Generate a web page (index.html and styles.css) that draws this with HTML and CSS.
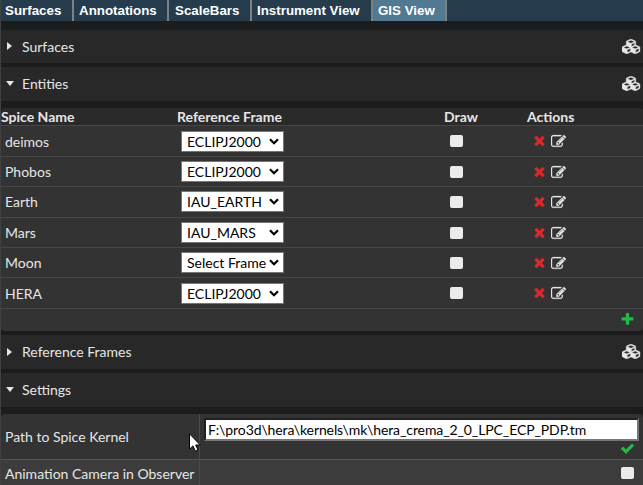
FILE: index.html
```html
<!DOCTYPE html>
<html lang="en">
<head>
<meta charset="utf-8">
<title>GIS View</title>
<link rel="stylesheet" href="styles.css">
</head>
<body>
<svg class="defs" width="0" height="0">
  <symbol id="cubes" viewBox="0 0 2304 1792"><path d="M640 1632l384-192v-314l-384 164v342zm-64-454l404-173-404-173-404 173zm1088 454l384-192v-314l-384 164v342zm-64-454l404-173-404-173-404 173zm-448-293l384-165v-266l-384 164v267zm-64-379l441-189-441-189-441 189zm1088 518v416q0 36-19 67t-52 47l-448 224q-25 14-57 14t-57-14l-448-224q-4-2-7-4-2 2-7 4l-448 224q-25 14-57 14t-57-14l-448-224q-33-16-52-47t-19-67v-416q0-38 21.5-70t56.5-48l434-186v-400q0-38 21.5-70t56.5-48l448-192q23-10 50-10t50 10l448 192q35 16 56.500 48t21.500 70v400l434 186q36 16 57 48t21 70z"/></symbol>
  <symbol id="remove" viewBox="0 0 1792 1792"><path d="M1490 1322q0 40-28 68l-136 136q-28 28-68 28t-68-28l-294-294-294 294q-28 28-68 28t-68-28l-136-136q-28-28-28-68t28-68l294-294-294-294q-28-28-28-68t28-68l136-136q28-28 68-28t68 28l294 294 294-294q28-28 68-28t68 28l136 136q28 28 28 68t-28 68l-294 294 294 294q28 28 28 68z"/></symbol>
  <symbol id="edit" viewBox="0 0 1792 1792"><path d="M888 1184l116-116-152-152-116 116v56h96v96h56zm440-720q-16-16-33 1l-350 350q-17 17-1 33t33-1l350-350q17-17 1-33zm80 594v190q0 119-84.500 203.500t-203.500 84.500h-832q-119 0-203.500-84.500t-84.500-203.500v-832q0-119 84.500-203.500t203.500-84.500h832q63 0 117 25 15 7 18 23 3 17-9 29l-49 49q-14 14-32 8-23-6-45-6h-832q-66 0-113 47t-47 113v832q0 66 47 113t113 47h832q66 0 113-47t47-113v-126q0-13 9-22l64-64q15-15 35-7t20 29zm-96-738l288 288-672 672h-288v-288zm444 132l-92 92-288-288 92-92q28-28 68-28t68 28l152 152q28 28 28 68t-28 68z"/></symbol>
  <symbol id="add" viewBox="0 0 1792 1792"><path d="M1600 736v192q0 40-28 68t-68 28h-416v416q0 40-28 68t-68 28h-192q-40 0-68-28t-28-68v-416h-416q-40 0-68-28t-28-68v-192q0-40 28-68t68-28h416v-416q0-40 28-68t68-28h192q40 0 68 28t28 68v416h416q40 0 68 28t28 68z"/></symbol>
  <symbol id="check" viewBox="0 0 1792 1792"><path d="M1671 566q0 40-28 68l-724 724-136 136q-28 28-68 28t-68-28l-136-136-362-362q-28-28-28-68t28-68l136-136q28-28 68-28t68 28l294 295 656-657q28-28 68-28t68 28l136 136q28 28 28 68z"/></symbol>
  <symbol id="chevron" viewBox="0 0 10 7"><path d="M1 1.200L5 5.200L9 1.200" fill="none" stroke="#000" stroke-width="2.200"/></symbol>
</svg>

<nav class="tabs">
  <div class="tab t1">Surfaces</div>
  <div class="tab t2">Annotations</div>
  <div class="tab t3">ScaleBars</div>
  <div class="tab t4">Instrument View</div>
  <div class="tab t5 active">GIS View</div>
</nav>

<main class="panel">
  <div class="section surfaces"><i class="caret"></i><span>Surfaces</span><svg class="cubes"><use href="#cubes"/></svg></div>
  <div class="section entities"><i class="caret open"></i><span>Entities</span><svg class="cubes"><use href="#cubes"/></svg></div>

  <div class="entity-table">
    <div class="row head"><b>Spice Name</b><b>Reference Frame</b><b>Draw</b><b>Actions</b></div>
    <div class="row tall"><span class="name">deimos</span><div class="pick"><select><option>ECLIPJ2000</option></select><svg><use href="#chevron"/></svg></div><i class="box"></i><div class="actions"><svg class="icon red"><use href="#remove"/></svg><svg class="icon edit"><use href="#edit"/></svg></div></div>
    <div class="row"><span class="name">Phobos</span><div class="pick"><select><option>ECLIPJ2000</option></select><svg><use href="#chevron"/></svg></div><i class="box"></i><div class="actions"><svg class="icon red"><use href="#remove"/></svg><svg class="icon edit"><use href="#edit"/></svg></div></div>
    <div class="row long"><span class="name">Earth</span><div class="pick"><select><option>IAU_EARTH</option></select><svg><use href="#chevron"/></svg></div><i class="box"></i><div class="actions"><svg class="icon red"><use href="#remove"/></svg><svg class="icon edit"><use href="#edit"/></svg></div></div>
    <div class="row"><span class="name">Mars</span><div class="pick"><select><option>IAU_MARS</option></select><svg><use href="#chevron"/></svg></div><i class="box"></i><div class="actions"><svg class="icon red"><use href="#remove"/></svg><svg class="icon edit"><use href="#edit"/></svg></div></div>
    <div class="row"><span class="name">Moon</span><div class="pick"><select><option>Select Frame</option></select><svg><use href="#chevron"/></svg></div><i class="box"></i><div class="actions"><svg class="icon red"><use href="#remove"/></svg><svg class="icon edit"><use href="#edit"/></svg></div></div>
    <div class="row tall"><span class="name">HERA</span><div class="pick"><select><option>ECLIPJ2000</option></select><svg><use href="#chevron"/></svg></div><i class="box"></i><div class="actions"><svg class="icon red"><use href="#remove"/></svg><svg class="icon edit"><use href="#edit"/></svg></div></div>
    <div class="add-row"><svg class="icon green"><use href="#add"/></svg></div>
  </div>

  <div class="section frames"><i class="caret"></i><span>Reference Frames</span><svg class="cubes"><use href="#cubes"/></svg></div>
  <div class="section settings"><i class="caret open"></i><span>Settings</span></div>

  <div class="settings-table">
    <div class="setting path">
      <div class="label">Path to Spice Kernel</div>
      <div class="value"><input type="text" value="F:\pro3d\hera\kernels\mk\hera_crema_2_0_LPC_ECP_PDP.tm"><svg class="icon green"><use href="#check"/></svg></div>
    </div>
    <div class="setting camera">
      <div class="label">Animation Camera in Observer</div>
      <div class="value"><i class="box"></i></div>
    </div>
  </div>
</main>
<svg class="pointer" viewBox="0 0 12 19"><path d="M.5 .8V16.200L4 12.900L6.300 18.200L9 17L6.700 12H11.300Z" fill="#fff" stroke="#000"/></svg>
</body>
</html>
```

FILE: styles.css
```css
* { box-sizing: border-box; }
body {
  margin: 0;
  width: 643px;
  height: 485px;
  overflow: hidden;
  background: #1b1c1d;
  color: #e6e6e6;
  font: 14px/20px Lato, sans-serif;
  border-left: 1px solid #404142;
}
.defs { position: absolute; }
svg { display: block; fill: #e6e6e6; }

.tabs {
  display: flex;
  height: 21px;
  background: #253c4d;
  color: #fff;
  font: bold 13.333px/21px "Liberation Sans", sans-serif;
}
.tab { padding-left: 5px; border-right: 2px solid #808080; white-space: nowrap; }
.t1 { width: 73px; padding-left: 4px; }
.t2 { width: 95px; }
.t3 { width: 83px; padding-left: 6px; }
.t4 { width: 121px; }
.t5 { width: 74px; }
.active { background: #527992; }

.section {
  display: flex;
  align-items: center;
  height: 34px;
  padding: 0 2px 0 5px;
  background: #282828;
}
.section span { flex: 1; }
.surfaces { height: 33px; margin-top: 9px; }
.entities { margin-top: 4px; }
.frames, .settings { margin-top: 4px; }
.caret {
  width: 16px;
  height: 9px;
}
.caret::before {
  content: "";
  display: block;
  width: 0;
  margin-left: 1px;
  border: solid transparent;
  border-width: 4.5px 0 4.5px 5px;
  border-left-color: #e6e6e6;
}
.caret.open::before {
  margin: 1px 0 0;
  border-width: 5px 4.5px 0;
  border-color: #e6e6e6 transparent transparent;
}
.cubes { width: 19px; height: 15px; margin-top: -1px; stroke: #e6e6e6; stroke-width: 50; }

.entity-table {
  margin-top: 7px;
  border-radius: 4px;
  background: #333;
  overflow: hidden;
}
.row {
  display: grid;
  grid-template-columns: 180px 269px 82px 1fr;
  height: 30px;
  border-bottom: 1px solid #474747;
}
.row.tall, .row.long { height: 31px; }
.row.head {
  grid-template-columns: 176px 267px 83px 1fr;
  height: 18px;
  line-height: 18px;
  background: #2a2a2a;
}
.name { padding-left: 4px; line-height: 30px; }
.tall .name { line-height: 32px; }
.pick {
  display: grid;
  width: 103px;
  height: 21px;
  margin-top: 4px;
}
.tall .pick { margin-top: 5px; }
.pick select, .pick svg { grid-area: 1 / 1; }
.pick select {
  appearance: none;
  margin: 0;
  padding: 0 4px 0 5px;
  border: 1px solid #767676;
  border-radius: 0;
  background: #fff;
  color: #000;
  font: 14px/19px Lato, sans-serif;
}
.pick svg { width: 10px; height: 7px; margin: 7px 0 0 88px; }
.box {
  width: 13px;
  height: 12px;
  margin-top: 9px;
  border-radius: 2px;
  background: #ebebeb;
}
.actions { display: flex; gap: 5px; padding-top: 7px; }
.icon { width: 15px; height: 15px; }
.edit { margin: 1px 0 0 -1px; stroke: #e6e6e6; stroke-width: 30; }
.red { fill: #db2828; }
.green { fill: #21ba45; }
.add-row { display: flex; justify-content: flex-end; height: 22px; padding: 3px 8px 0 0; }

.settings-table {
  margin-top: 7px;
  border-radius: 4px 4px 0 0;
  background: #333;
  overflow: hidden;
}
.setting { display: grid; grid-template-columns: 199px 1fr; }
.label { padding-left: 4px; border-right: 1px solid #4a4a4a; white-space: nowrap; }
.path { height: 46px; border-bottom: 1px solid #555; }
.path .label { line-height: 46px; }
.value { display: flex; flex-direction: column; align-items: flex-end; padding-right: 4px; }
.path .value { padding-top: 4px; }
.value input {
  width: 435px;
  height: 23px;
  padding: 0 2px;
  border: 2px solid;
  border-color: #202020 #767676 #767676 #202020;
  background: #fff;
  color: #000;
  font: 14px/19px Lato, sans-serif;
  letter-spacing: -0.1px;
}
.value .icon { margin-right: 4px; }
.camera { height: 26px; background: #3c3c3c; }
.camera .label { line-height: 28px; }
.camera .box { margin: 7px 5px 0 0; }
.pointer { position: absolute; left: 189px; top: 433px; width: 12px; height: 19px; }
```
